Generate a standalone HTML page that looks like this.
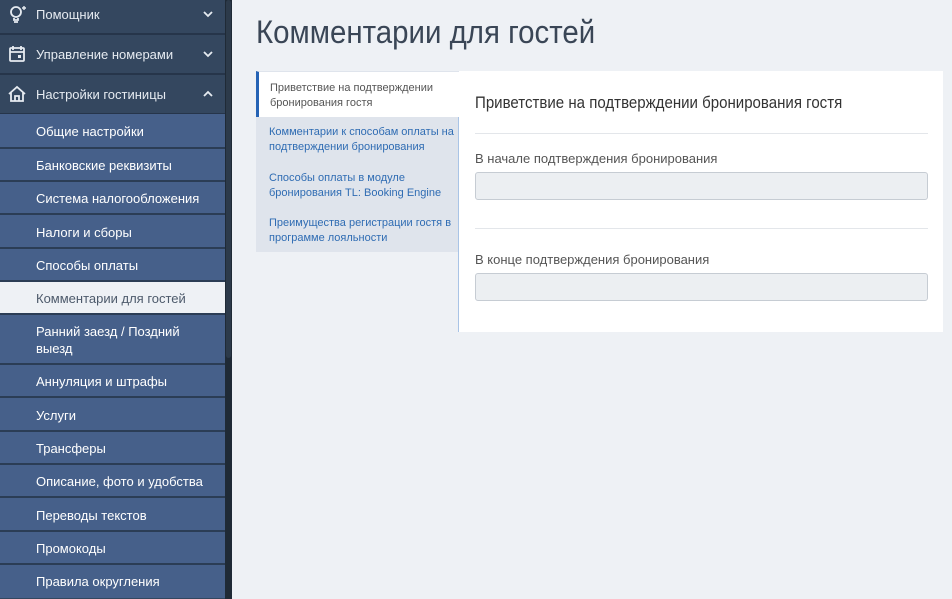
<!DOCTYPE html><html><head><meta charset="utf-8"><style>
*{box-sizing:border-box;margin:0;padding:0}
body{width:952px;height:599px;overflow:hidden;background:#eef1f5;font-family:"Liberation Sans",sans-serif;position:relative}
.sb{position:absolute;left:0;top:0;width:225px;height:599px;background:#34475f}
.scr{position:absolute;left:225px;top:0;width:7px;height:599px;background:#1f2a36}
.scr i{position:absolute;left:1px;top:0;width:5px;height:358px;background:#2c3a4a;border-radius:3px}
.top{position:absolute;left:0;width:225px;height:40px;border-bottom:2px solid #26354a;color:#e6ebf1;font-size:13px;display:flex;align-items:center;padding-left:36px}
.top svg{position:absolute;left:8px}
.top .ch{position:absolute;left:203px;top:15px}
.sub{position:absolute;left:0;width:225px;background:#46608a;border-top:2px solid #2b3d55;color:#fff;font-size:13px;padding-left:36px;display:flex;align-items:center;line-height:17px}
.sub.act{background:#eef1f5;color:#4d5a6b}
h1{position:absolute;left:256px;top:14px;font-weight:normal;font-size:32px;color:#3a4656;transform:scaleX(0.92);transform-origin:0 0;white-space:nowrap}
.tabs{position:absolute;left:256px;top:71px;width:203px;height:261px;background:#eef1f5;border-right:1px solid #a9c4e6}
.tl{position:absolute;left:0;top:46px;width:202px;height:135px;background:#dfe4ec}
.t{position:absolute;left:13px;font-size:11px;line-height:15px;color:#2f6cb3;white-space:nowrap}
.ta{position:absolute;left:0;top:0;width:203px;height:46px;background:#fff;border-left:3px solid #2563b5;border-top:1px solid #dfe4ec}
.ta div{position:absolute;left:11px;top:9px;font-size:11px;line-height:15px;color:#555}
.ct{position:absolute;left:459px;top:71px;width:484px;height:261px;background:#fff}
.ct h2{position:absolute;left:16px;top:22px;font-weight:normal;font-size:17px;color:#333;transform:scaleX(0.885);transform-origin:0 0;white-space:nowrap}
.ln{position:absolute;left:16px;width:453px;height:1px;background:#e3e6ea}
.lb{position:absolute;left:16px;font-size:13px;color:#555}
.in{position:absolute;left:16px;width:453px;height:28px;background:#eceff2;border:1px solid #c6ccd3;border-radius:3px}
</style></head><body>
<div class="sb">
<div class="top" style="top:-5px;height:40px">
<svg width="20" height="20" viewBox="0 0 20 20" fill="none" stroke="#e6ebf1" stroke-width="1.8"><circle cx="8" cy="8" r="5"/><path d="M6 14v2h4v-2M6 18h4"/><path d="M16 2v4M14 4h4" stroke-width="1.4"/></svg>
Помощник<svg class="ch" width="10" height="8" viewBox="0 0 10 8"><path d="M1 2l4 4 4-4" stroke="#e6ebf1" stroke-width="1.8" fill="none"/></svg></div>
<div class="top" style="top:35px">
<svg width="18" height="18" viewBox="0 0 18 18" fill="none" stroke="#e6ebf1" stroke-width="1.8"><rect x="2" y="3" width="14" height="13" rx="1"/><path d="M2 7h14M5 1v4M13 1v4"/><rect x="10" y="10" width="3" height="3" fill="#e6ebf1" stroke="none"/></svg>
Управление номерами<svg class="ch" width="10" height="8" viewBox="0 0 10 8"><path d="M1 2l4 4 4-4" stroke="#e6ebf1" stroke-width="1.8" fill="none"/></svg></div>
<div class="top" style="top:75px">
<svg width="18" height="18" viewBox="0 0 18 18" fill="none" stroke="#e6ebf1" stroke-width="1.8"><path d="M1 9l8-7 8 7M3 7v9h12V7M7 16v-5h4v5"/></svg>
Настройки гостиницы<svg class="ch" width="10" height="8" viewBox="0 0 10 8"><path d="M1 6l4-4 4 4" stroke="#e6ebf1" stroke-width="1.8" fill="none"/></svg></div>
<div class="sub" style="top:114px;height:35px;border-top:none">Общие настройки</div>
<div class="sub" style="top:147px;height:35px">Банковские реквизиты</div>
<div class="sub" style="top:180px;height:35px">Система налогообложения</div>
<div class="sub" style="top:213px;height:36px">Налоги и сборы</div>
<div class="sub" style="top:247px;height:35px">Способы оплаты</div>
<div class="sub act" style="top:280px;height:35px">Комментарии для гостей</div>
<div class="sub" style="top:313px;height:52px">Ранний заезд / Поздний<br>выезд</div>
<div class="sub" style="top:363px;height:35px">Аннуляция и штрафы</div>
<div class="sub" style="top:396px;height:36px">Услуги</div>
<div class="sub" style="top:430px;height:35px">Трансферы</div>
<div class="sub" style="top:463px;height:35px">Описание, фото и удобства</div>
<div class="sub" style="top:496px;height:36px">Переводы текстов</div>
<div class="sub" style="top:530px;height:35px">Промокоды</div>
<div class="sub" style="top:563px;height:35px">Правила округления</div>
</div>
<div class="scr"><i></i></div>
<h1>Комментарии для гостей</h1>
<div class="tabs">
<div class="ta"><div>Приветствие на подтверждении<br>бронирования гостя</div></div>
<div class="tl">
<div class="t" style="top:8px">Комментарии к способам оплаты на<br>подтверждении бронирования</div>
<div class="t" style="top:54px">Способы оплаты в модуле<br>бронирования TL: Booking Engine</div>
<div class="t" style="top:99px">Преимущества регистрации гостя в<br>программе лояльности</div>
</div></div>
<div class="ct">
<h2>Приветствие на подтверждении бронирования гостя</h2>
<div class="ln" style="top:62px"></div>
<div class="lb" style="top:80px">В начале подтверждения бронирования</div>
<div class="in" style="top:101px"></div>
<div class="ln" style="top:157px"></div>
<div class="lb" style="top:181px">В конце подтверждения бронирования</div>
<div class="in" style="top:202px"></div>
</div>
</body></html>
